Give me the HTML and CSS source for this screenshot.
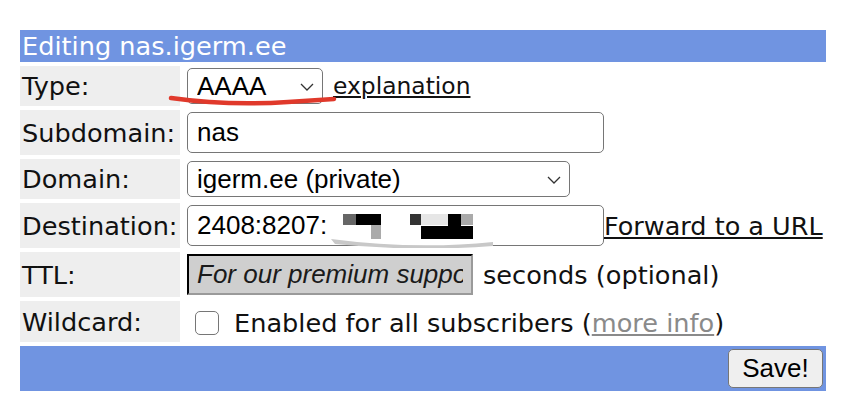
FILE: index.html
```html
<!DOCTYPE html>
<html>
<head>
<meta charset="utf-8">
<link rel="stylesheet" href="styles.css">
</head>
<body>
<div class="page">
  <table class="form">
    <tr><td colspan="2" class="head">Editing nas.igerm.ee</td></tr>
    <tr class="r40">
      <td class="label">Type:</td>
      <td class="field">
        <span class="selwrap"><select class="sel type"><option>AAAA</option></select><svg class="chev" width="14" height="8" viewBox="0 0 14 8"><path d="M1 1 L7 7 L13 1" fill="none" stroke="#333" stroke-width="1.3"/></svg></span><a href="#" class="link expl">explanation</a>
      </td>
    </tr>
    <tr class="r45">
      <td class="label">Subdomain:</td>
      <td class="field"><input class="txt sub" type="text" value="nas"></td>
    </tr>
    <tr class="r40">
      <td class="label">Domain:</td>
      <td class="field"><span class="selwrap"><select class="sel dom"><option>igerm.ee (private)</option></select><svg class="chev" width="14" height="8" viewBox="0 0 14 8"><path d="M1 1 L7 7 L13 1" fill="none" stroke="#333" stroke-width="1.3"/></svg></span></td>
    </tr>
    <tr class="r45">
      <td class="label">Destination:</td>
      <td class="field">
        <span class="destwrap"><input class="txt dest" type="text" value="2408:8207:"><svg class="redact" width="170" height="42" viewBox="0 0 170 42">
          <path d="M4 2 H166 V40 Q90 44 4 36 Z" fill="#fff"/>
          <path d="M6 33 Q90 44 168 36 L168 40 Q90 46 10 38 Z" fill="#c8c8c8"/>
          <rect x="18" y="8" width="13" height="11" fill="#666"/>
          <rect x="31" y="8" width="25" height="11" fill="#000"/>
          <rect x="46" y="19" width="10" height="14" fill="#aaa"/>
          <rect x="85" y="8" width="11" height="11" fill="#333"/>
          <rect x="96" y="8" width="27" height="11" fill="#e6e6e6"/>
          <rect x="123" y="8" width="13" height="13" fill="#000"/>
          <rect x="136" y="8" width="12" height="11" fill="#aaa"/>
          <rect x="96" y="20" width="52" height="13" fill="#000"/>
        </svg></span><a href="#" class="link fwd">Forward to a URL</a>
      </td>
    </tr>
    <tr class="r45">
      <td class="label">TTL:</td>
      <td class="field"><input class="ttl" type="text" value="For our premium support customers only" disabled><span class="txtlabel sec">seconds (optional)</span></td>
    </tr>
    <tr class="r41">
      <td class="label">Wildcard:</td>
      <td class="field wild"><input type="checkbox" class="chk"><span class="txtlabel">Enabled for all subscribers (<a href="#" class="more">more info</a>)</span></td>
    </tr>
    <tr><td colspan="2" class="foot"><button class="save">Save!</button></td></tr>
  </table>
  <svg class="scribble" width="170" height="16" viewBox="0 0 170 16"><path d="M3 5 Q60 13 120 9 Q150 7 166 6" fill="none" stroke="#e0392b" stroke-width="4.5" stroke-linecap="round"/></svg>
</div>
</body>
</html>
```

FILE: styles.css
```css
html, body { margin: 0; padding: 0; background: #fff; }
.page { position: relative; padding: 26px 0 0 16px; }
.form {
  border-collapse: separate;
  border-spacing: 4px 4.5px;
  width: 814px;
  font-family: "DejaVu Sans", Verdana, sans-serif;
  font-size: 25.6px;
  color: #111;
}
.form td { padding: 2px; vertical-align: middle; }
.head {
  background: #7094e1;
  color: #fff;
  height: 28px;
  line-height: 28px;
  padding: 2px 2px !important;
}
.label { background: #eeeeee; width: 156px; white-space: nowrap; }
.field { white-space: nowrap; padding-left: 3px !important; height: 40px; }
.r40 .field { height: 36px; }
.r45 .field { height: 41px; }
.r41 .field { height: 37px; }
.selwrap { position: relative; display: inline-block; vertical-align: middle; }
.sel {
  appearance: none;
  -webkit-appearance: none;
  font-family: "Liberation Sans", Arial, sans-serif;
  font-size: 26px;
  color: #000;
  background: #fff;
  border: 1px solid #767676;
  border-radius: 5px;
  height: 36px;
  padding: 0 0 0 9px;
  margin: 0;
  display: block;
}
.type { width: 136px; }
.dom { width: 383px; }
.chev { position: absolute; right: 9px; top: 15px; }
.link { color: #111; text-decoration: underline; vertical-align: middle; }
.expl { font-size: 23.4px; margin-left: 10px; }
.fwd { font-size: 25.5px; }
.txt {
  font-family: "Liberation Sans", Arial, sans-serif;
  font-size: 26px;
  color: #000;
  border: 1px solid #767676;
  border-radius: 5px;
  height: 41px;
  box-sizing: border-box;
  padding: 0 9px;
  margin: 0;
  vertical-align: middle;
}
.sub { width: 417px; }
.destwrap { position: relative; display: inline-block; vertical-align: middle; }
.dest { width: 417px; display: block; }
.redact { position: absolute; left: 138px; top: 1px; }
.ttl {
  font-family: "Liberation Sans", Arial, sans-serif;
  font-size: 26px;
  font-style: italic;
  color: #1a1a1a;
  background: #cfcfcf;
  border: 2px inset #555;
  border-color: #333 #9a9a9a #9a9a9a #333;
  width: 286px;
  height: 41px;
  box-sizing: border-box;
  padding: 0 8px;
  margin: 0;
  vertical-align: middle;
}
.txtlabel { vertical-align: middle; }
.sec { margin-left: 10px; }
.wild { padding-left: 11px !important; }
.chk {
  appearance: none;
  -webkit-appearance: none;
  width: 24px;
  height: 24px;
  border: 1.5px solid #767676;
  border-radius: 5px;
  background: #fff;
  margin: 0 15px 0 0;
  vertical-align: middle;
  box-sizing: border-box;
}
.more { color: #8a8a8a; text-decoration: underline; }
.foot {
  background: #7094e1;
  text-align: right;
  height: 41px;
  padding: 2px 3px 2px 2px !important;
}
.save {
  font-family: "Liberation Sans", Arial, sans-serif;
  font-size: 26px;
  color: #000;
  background: #efefef;
  border: 1px solid #767676;
  border-radius: 5px;
  width: 95px;
  height: 39px;
  padding: 0;
  margin: 0;
}
.scribble { position: absolute; left: 168px; top: 93px; }
```
